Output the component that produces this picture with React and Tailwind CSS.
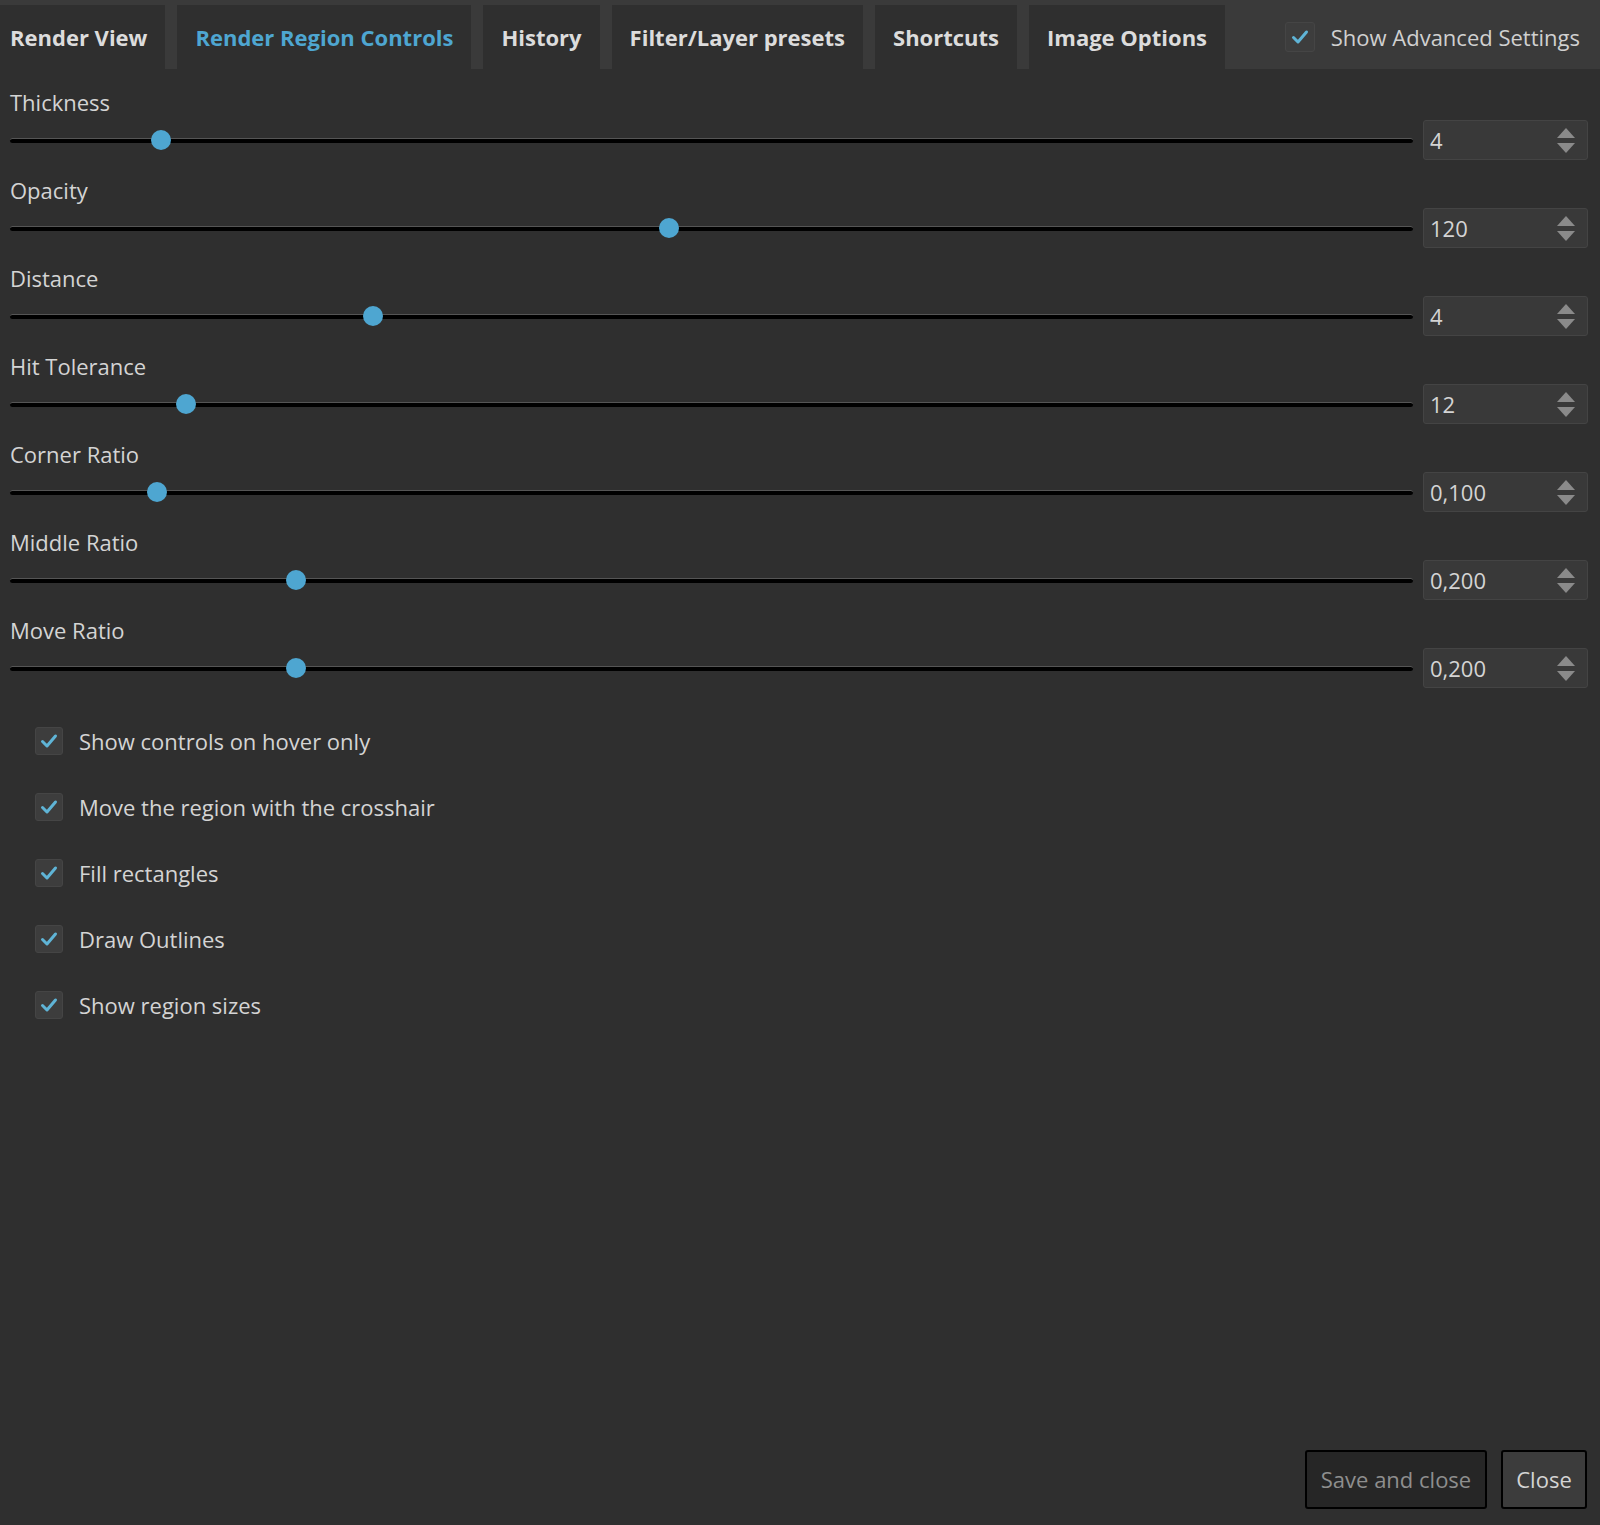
import React from "react";

const tabs = ["Render View", "Render Region Controls", "History", "Filter/Layer presets", "Shortcuts", "Image Options"];
const sliders = [
  ["Thickness", "4", 161],
  ["Opacity", "120", 669],
  ["Distance", "4", 373],
  ["Hit Tolerance", "12", 186],
  ["Corner Ratio", "0,100", 157],
  ["Middle Ratio", "0,200", 296],
  ["Move Ratio", "0,200", 296],
];
const checks = ["Show controls on hover only", "Move the region with the crosshair", "Fill rectangles", "Draw Outlines", "Show region sizes"];

function Check({ size = 28 }) {
  return (
    <div className="flex items-center justify-center rounded-[3px] bg-[#3d3d3d] border border-[#454545]" style={{ width: size, height: size }}>
      <svg width="20" height="20" viewBox="0 0 20 20"><path d="M3.5 10.5 L8 15 L16.5 5" fill="none" stroke="#5fb4d6" strokeWidth="3" strokeLinecap="round" strokeLinejoin="round" /></svg>
    </div>
  );
}

export default function App() {
  return (
    <div className="w-[1600px] h-[1525px] bg-[#2f2f2f] flex flex-col text-[#d4d4d4]" style={{ fontFamily: '"Open Sans", "Noto Sans", sans-serif' }}>
      <div className="h-[69px] bg-[#3a3a3a] flex items-end pt-[5px] shrink-0">
        {tabs.map((t, i) => (
          <div key={t} className={`h-[64px] flex items-center px-[18px] first:pl-[10px] bg-[#2f2f2f] mr-[12px] text-[22px] font-bold ${i === 1 ? "text-[#4ea6d1]" : "text-[#dcdcdc]"}`}>{t}</div>
        ))}
        <div className="flex-1 h-[64px] flex items-center justify-end pr-[20px] gap-[16px]">
          <Check size={30} />
          <span className="text-[22px] text-[#d0d0d0]">Show Advanced Settings</span>
        </div>
      </div>
      <div className="flex flex-col pl-[10px] pr-[12px] pt-[18px]">
        {sliders.map(([l, v, x]) => (
          <div key={l} className="h-[88px] flex flex-col">
            <div className="text-[22px] leading-[30px] h-[33px]">{l}</div>
            <div className="flex items-center gap-[10px]">
              <div className="relative flex-1 h-[40px] flex items-center">
                <div className="w-full h-[5px] rounded-full bg-black border-t border-[#555]" />
                <div className="absolute w-[20px] h-[20px] rounded-full bg-[#4ea6d1]" style={{ left: x - 10 - 10 }} />
              </div>
              <div className="w-[165px] h-[40px] rounded-[3px] bg-[#393939] border border-[#444] flex items-center justify-between pl-[6px] pr-[12px]">
                <span className="text-[22px] text-[#d4d4d4]">{v}</span>
                <div className="flex flex-col gap-[5px]">
                  <svg width="18" height="10"><path d="M0 10 L9 0 L18 10 Z" fill="#8a8a8a" /></svg>
                  <svg width="18" height="10"><path d="M0 0 L9 10 L18 0 Z" fill="#8a8a8a" /></svg>
                </div>
              </div>
            </div>
          </div>
        ))}
        <div className="flex flex-col pl-[25px] pt-[5px]">
          {checks.map((c) => (
            <div key={c} className="h-[66px] flex items-center gap-[16px]">
              <Check />
              <span className="text-[22px] text-[#d4d4d4]">{c}</span>
            </div>
          ))}
        </div>
      </div>
      <div className="flex-1" />
      <div className="flex justify-end gap-[14px] pr-[13px] pb-[16px]">
        <button className="w-[182px] h-[59px] rounded-[3px] bg-[#262626] border-2 border-black text-[22px] text-[#8e8e8e]">Save and close</button>
        <button className="w-[86px] h-[59px] rounded-[3px] bg-[#3c3c3c] border-2 border-black text-[22px] text-[#d4d4d4]">Close</button>
      </div>
    </div>
  );
}
